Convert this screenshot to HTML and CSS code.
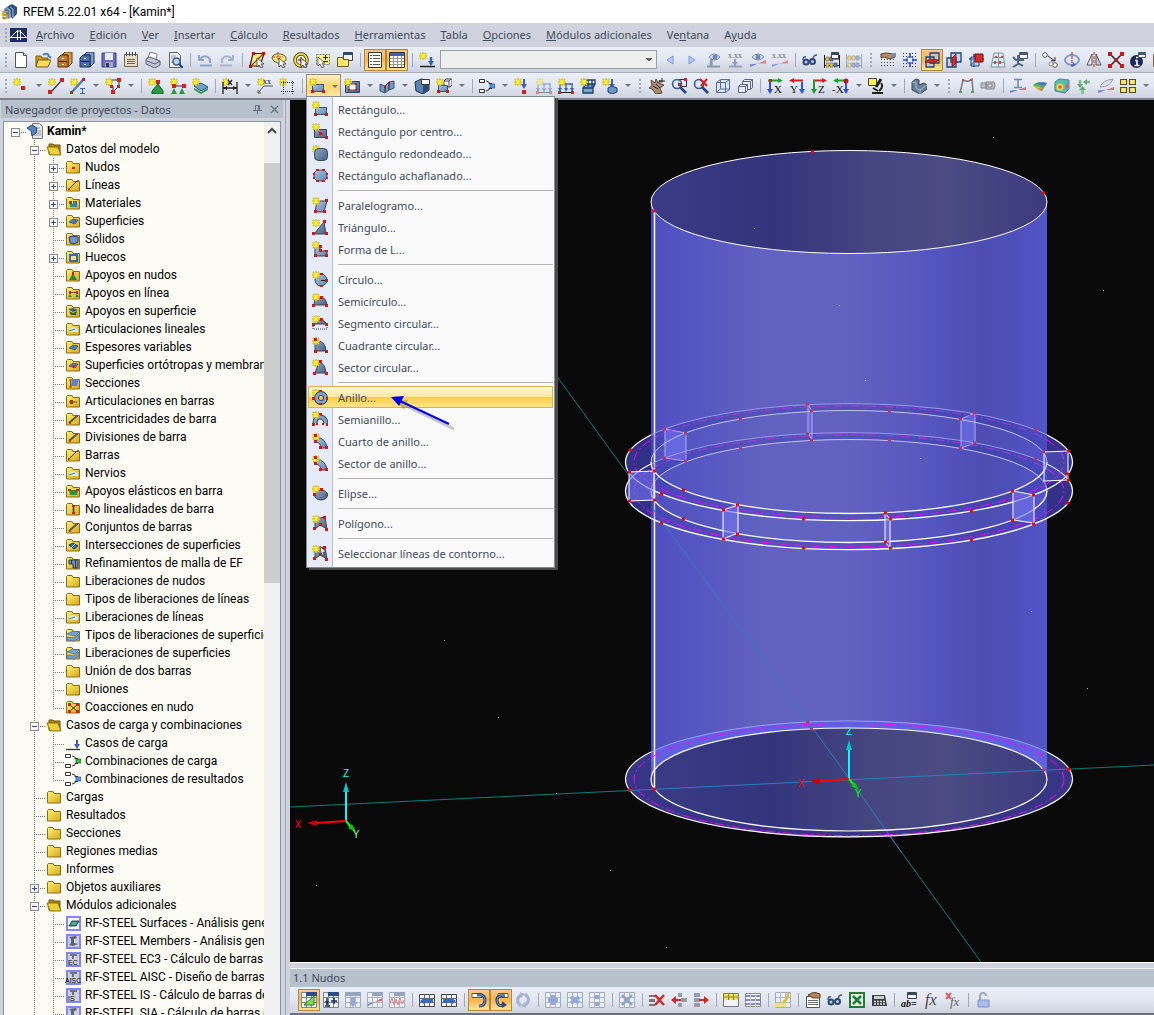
FILE: index.html
```html
<!DOCTYPE html>
<html lang="es">
<head>
<meta charset="utf-8">
<title>RFEM 5.22.01 x64 - [Kamin*]</title>
<meta name="viewport" content="width=device-width, initial-scale=1">
<link rel="stylesheet" href="styles.css">
</head>
<body>
<svg class="sprite" aria-hidden="true">
<defs>
<linearGradient id="gBlue" x1="0" y1="0" x2="1" y2="1"><stop offset="0" stop-color="#a9c4e0"/><stop offset="1" stop-color="#5f86b0"/></linearGradient>
<linearGradient id="gSteel" x1="0" y1="0" x2="1" y2="1"><stop offset="0" stop-color="#8fa8c4"/><stop offset="1" stop-color="#47617f"/></linearGradient>
<linearGradient id="gFolder" x1="0" y1="0" x2="1" y2="1"><stop offset="0" stop-color="#fff27a"/><stop offset="1" stop-color="#d8a818"/></linearGradient>
</defs>
<symbol id="st" viewBox="0 0 16 16"><path d="M4 0v8M0 4h8M1 1l6 6M7 1L1 7" stroke="#a89c30" stroke-width="1.600"/><path d="M4 0v8M0 4h8M1.500 1.500l5 5M6.500 1.500l-5 5" stroke="#fff02a" stroke-width="1.100"/></symbol>
<symbol id="plus" viewBox="0 0 20 18"><path d="M15 10.5h5" stroke="#777" stroke-dasharray="1 1"/><rect x="5.500" y="6.500" width="8" height="8" fill="#fff" stroke="#8a8a8a"/><path d="M7 10.500h5M9.500 8v5" stroke="#2b4c9b"/></symbol>
<symbol id="minus" viewBox="0 0 20 18"><path d="M15 10.5h5" stroke="#777" stroke-dasharray="1 1"/><rect x="5.500" y="6.500" width="8" height="8" fill="#fff" stroke="#8a8a8a"/><path d="M7 10.500h5" stroke="#2b4c9b"/></symbol>

<symbol id="logo" viewBox="0 0 16 16"><path d="M2 5l4-3 4 3v8l-4 2z" fill="#5f7fa6"/><path d="M6 2l4-2 5 3v7l-5 5z" fill="#31527e"/><path d="M8 3l3 2v8M5 4l3 2v8" stroke="#a8c0dc"/></symbol>
<symbol id="bridge" viewBox="0 0 17 14"><path d="M0 0h17v14H0z" fill="#1c2c60"/><path d="M0 9.500h17M7.500 2v10M10.500 2v10M1 9l6-6 3 0 6 6" stroke="#fff"/></symbol>
<symbol id="new" viewBox="0 0 16 16"><path d="M2.500.5h8l3 3v12h-11z" fill="#fff" stroke="#555"/><path d="M10.500.5v3h3" fill="#ddd" stroke="#555"/></symbol>
<symbol id="open" viewBox="0 0 16 16"><path d="M1 14V4h5l1 2h6v8z" fill="#c89c1c" stroke="#7a5c10"/><path d="M3 8h13l-3 7H1z" fill="#f6dc5a" stroke="#7a5c10"/><path d="M8 3q4-3 6 1" stroke="#4c7cc0" stroke-width="2"/><path d="M12 4h4v3z" fill="#4c7cc0"/></symbol>
<symbol id="drawO" viewBox="0 0 16 16"><path d="M5 3l3-3h7v11l-4 4V3z" fill="#d89c48" stroke="#5c3808"/><path d="M1 6l3-3h7v12H1z" fill="#c07c28" stroke="#5c3808"/><path d="M2 9.500h8" stroke="#3a2000"/><path d="M5 6h2v1H5zM5 12h2v1H5z" fill="#fff"/></symbol>
<symbol id="drawB" viewBox="0 0 16 16"><path d="M5 3l3-3h7v11l-4 4V3z" fill="#7c9cd4" stroke="#1c2c58"/><path d="M1 6l3-3h7v12H1z" fill="#4c70b4" stroke="#1c2c58"/><path d="M2 9.500h8" stroke="#101c40"/><path d="M5 6h2v1H5zM5 12h2v1H5z" fill="#fff"/></symbol>
<symbol id="save" viewBox="0 0 16 16"><path d="M1 1h14v14H1z" fill="#6c6cb8" stroke="#3c3c88"/><path d="M4 1h8v7H4z" fill="#e8eaf4"/><path d="M4 10h8v5H4z" fill="#a8a8c0"/><path d="M5 11h3v4H5z" fill="#33336c"/></symbol>
<symbol id="doc" viewBox="0 0 16 16"><path d="M1.500 2.500h13v12h-13z" fill="#e8dccc" stroke="#7a644c"/><path d="M3.500 0v4M6.500 0v4M9.500 0v4M12.500 0v4" stroke="#444"/><path d="M4 7.500h8M4 9.500h8M4 11.500h8" stroke="#7a644c"/></symbol>
<symbol id="print" viewBox="0 0 16 16"><path d="M3 6l2-6 7 2-1 6z" fill="#fff" stroke="#777"/><path d="M1 7l4-2 10 4v4l-5 3-9-4z" fill="#c4c8d4" stroke="#555c6c"/><path d="M2 9l8 3 5-3" stroke="#555c6c"/></symbol>
<symbol id="preview" viewBox="0 0 16 16"><path d="M2.500.5h8l3 3v12h-11z" fill="#f0f2f6" stroke="#666"/><path d="M4 4h5M4 6h4M4 10h3" stroke="#8a94a8"/><circle cx="9.500" cy="9.500" r="3.500" fill="#b8d8f0" stroke="#3f5f8f" stroke-width="1.500"/><path d="M12 12l4 4" stroke="#2c447c" stroke-width="2"/></symbol>
<symbol id="undo" viewBox="0 0 16 16"><path d="M2 3v5h5M2 8q6-7 11-1v4M3 13.500h12" stroke="#8fa3c8" stroke-width="2"/></symbol>
<symbol id="redo" viewBox="0 0 16 16"><path d="M14 3v5H9M14 8Q8 1 3 7v4M1 13.500h12" stroke="#a3b3ce" stroke-width="2"/></symbol>
<symbol id="cur" viewBox="0 0 16 16"><path d="M8 6l7 6h-3l2 3-2 1-2-3-2 2z" fill="#fff" stroke="#333" stroke-width=".8"/></symbol>
<symbol id="selR" viewBox="0 0 16 16"><path d="M4 1.500h11L11 14H1z" fill="#ffee78" stroke="#222" stroke-width="1.200"/><path d="M2 14L14 2" stroke="#c81818" stroke-width="1.200"/><path d="M3 0h3v3H3zM13 0h3v3h-3zM0 13h3v3H0z" fill="#c81010"/><use href="#cur"/></symbol>
<symbol id="selL" viewBox="0 0 16 16"><path d="M1 6q1-5 8-4t6 6q-3 4-8 3T1 6z" fill="#ffee78" stroke="#5f5a28"/><path d="M7 0v9M2 5h10" stroke="#d03030" stroke-dasharray="2 1"/><use href="#cur"/></symbol>
<symbol id="selC" viewBox="0 0 16 16"><circle cx="8" cy="8" r="6" fill="#fff" stroke="#222" stroke-width="3.400"/><circle cx="8" cy="8" r="6" fill="none" stroke="#f8e020" stroke-width="2"/><path d="M5 8h6M8 5v6" stroke="#d02020" stroke-width="1.500"/><use href="#cur"/></symbol>
<symbol id="selP" viewBox="0 0 16 16"><path d="M1.500 2.500h13v10h-13z" fill="#fff27a" stroke="#777" stroke-dasharray="2 1"/><path d="M10.500 3v5M8 5.500h5M8 9.500h5" stroke="#222"/><path d="M3 5l7 6H7l2 4-2 1-2-4-2 2z" fill="#fff" stroke="#444" stroke-width=".8"/></symbol>
<symbol id="wins" viewBox="0 0 16 16"><path d="M6.500.5h9v8h-9z" fill="#f2f4f8" stroke="#444"/><path d="M7 1h8v2H7z" fill="#28488c"/><path d="M.5 5.500h5l1 2h5v7H.5z" fill="#ffe668" stroke="#6c6020"/></symbol>
<symbol id="navi" viewBox="0 0 16 16"><path d="M1.500.5h13v15h-13z" fill="#fff" stroke="#3c3830"/><path d="M3 3.500h2M3 6.500h2M3 9.500h2M3 12.500h2M6 3.500h7M6 6.500h7M6 9.500h7M6 12.500h7" stroke="#5a564c"/></symbol>
<symbol id="tabl" viewBox="0 0 16 16"><path d="M.5.500h15v15H.5z" fill="#fff" stroke="#3c3830"/><path d="M1 1h14v3H1z" fill="#3c64b4"/><path d="M1 6.500h14M1 9.500h14M1 12.500h14M4.500 4v11M8.500 4v11M12.500 4v11" stroke="#999588"/></symbol>
<symbol id="load" viewBox="0 0 16 16"><use href="#st"/><path d="M1 14.500h15" stroke="#222" stroke-width="1.500"/><path d="M12 5v6" stroke="#3c60b8" stroke-width="2.500"/><path d="M9 9h6l-3 5z" fill="#3c60b8"/></symbol>
<symbol id="lt" viewBox="0 0 16 16"><path d="M11 4v8L5 8z" fill="#b8cbee" stroke="#7c98d0"/></symbol>
<symbol id="gt" viewBox="0 0 16 16"><path d="M5 4v8l6-4z" fill="#b8cbee" stroke="#7c98d0"/></symbol>
<symbol id="eyeP" viewBox="0 0 16 16"><path d="M1 14.500h13" stroke="#9098a8" stroke-width="2"/><path d="M6 6q-1 4-1 8" stroke="#9098b8" stroke-width="3"/><path d="M3 5q5-6 11 0-5 6-11 0z" fill="#e4eaf4" stroke="#7c88a0"/><circle cx="9" cy="5" r="2.500" fill="#6c88b8"/></symbol>
<symbol id="xxL" viewBox="0 0 16 16"><path d="M7 7v7M1 14.500h13" stroke="#98a0b4" stroke-width="2"/><path d="M4 10h6l-3 4z" fill="#8c9cc4"/></symbol>
<symbol id="eyeD" viewBox="0 0 16 16"><path d="M2 5q6-6 12 0-6 6-12 0z" fill="#e4eaf4" stroke="#7c88a0"/><circle cx="8" cy="5" r="2.500" fill="#6c88b8"/><path d="M0 15l8-3.500-8 1z" fill="#6c7ce0"/><path d="M16 8l-8 3.500h8z" fill="#e07c88"/></symbol>
<symbol id="xxD" viewBox="0 0 16 16"><path d="M0 15l8-3.500-8 1z" fill="#8c9ce0"/><path d="M16 8l-8 3.500h8z" fill="#e08c98"/></symbol>
<symbol id="glas" viewBox="0 0 16 16"><path d="M1 8q0-4 3-3M15 3q-4 0-4 5" stroke="#445c88" stroke-width="1.500"/><circle cx="4" cy="10" r="2.500" fill="#b4c8e4" stroke="#304878" stroke-width="2"/><circle cx="10.500" cy="9.500" r="2.500" fill="#b4c8e4" stroke="#304878" stroke-width="2"/></symbol>
<symbol id="bead2" viewBox="0 0 16 16"><path d="M.5 3v13M15.500 3v13M1 13.500h15M1 7h15" stroke="#222"/><path d="M2 5h3v4H2zM2 11h3v4H2zM6 11h3v4H6z" fill="#e8c848" stroke="#7a6418" stroke-width=".6"/><path d="M6 5h3v4H6zM10 11h3v4h-3z" fill="#6484c8" stroke="#24448c" stroke-width=".6"/><path d="M7.500.5h7v6h-7z" fill="#fff" stroke="#444"/><path d="M8 1h6v2H8z" fill="#28488c"/></symbol>
<symbol id="bead1" viewBox="0 0 16 16"><path d="M.5 2v14M15.500 2v14M1 13.500h15M1 6h15" stroke="#9aa"/><path d="M2 4h3v4H2zM6 4h3v4H6zM2 11h3v4H2z" fill="#f0e0a0" stroke="#aa9a60" stroke-width=".6"/><path d="M10 4h3v4h-3zM6 11h3v4H6zM10 11h3v4h-3z" fill="#a8b8e0" stroke="#7888b8" stroke-width=".6"/></symbol>
<symbol id="handg" viewBox="0 0 16 16"><path d="M1 7.500h14M1 10.500h14M1 13.500h14" stroke="#444" stroke-width="1.200" stroke-dasharray="1 2"/><path d="M1 2l5-1 9 1v3l-5 2-6-2-3 1z" fill="#b88c64" stroke="#5c4028"/><path d="M11 1h5v4h-5z" fill="#7c8ca8"/></symbol>
<symbol id="gridp" viewBox="0 0 16 16"><path d="M1 1.500h14M1 4.500h14M1 11.500h14M1 14.500h14" stroke="#333" stroke-width="1.200" stroke-dasharray="1 2"/><circle cx="8" cy="8" r="3.500" fill="#e8ecf8" stroke="#2850b8"/><path d="M8 1v14M1 8h14" stroke="#2850b8" stroke-width="1.500" stroke-dasharray="5 4"/></symbol>
<symbol id="wp1" viewBox="0 0 16 16"><path d="M6 1h9v10H6zM2 5h8v10H2z" fill="#a8c8f0" fill-opacity=".6" stroke="#1c447c" stroke-width="1.300"/><path d="M1 10l5-3 9 1-5 3z" fill="#d82c2c" stroke="#701010" stroke-width=".7"/></symbol>
<symbol id="wp2" viewBox="0 0 16 16"><path d="M5 1h10v9H5zM1 6h9v9H1z" fill="#a8c8f0" fill-opacity=".6" stroke="#1c447c" stroke-width="1.300"/><path d="M6 6l4-4v9l-4 4z" fill="#d82c2c" stroke="#701010" stroke-width=".7"/></symbol>
<symbol id="wp3" viewBox="0 0 16 16"><path d="M1 7h15M6 2v13M3 13l6-6" stroke="#1c447c" stroke-width="1.500"/><path d="M3 5h8v9H3z" fill="#a8c8f0" fill-opacity=".5" stroke="#1c447c"/><path d="M7 2h8v8H7z" fill="#d82c2c" stroke="#701010"/></symbol>
<symbol id="mesh" viewBox="0 0 16 16"><path d="M4 1h9l2 14H1z" fill="#dce8ec" stroke="#7c98a8"/><path d="M8.500 1v14M3 5.500h11M2 10.500h12" stroke="#7c98a8"/><path d="M5 4h2v2H5zM11 4h2v2h-2zM4 9h2v3H4zM9 9h2v3H9z" fill="#e03c3c"/></symbol>
<symbol id="sect" viewBox="0 0 16 16"><path d="M1 5l3 3h8M6 3v9l-5 3M6 11l5 3" stroke="#4c6488" stroke-width="2"/><path d="M7.500.5h8v6h-8z" fill="#fff" stroke="#555"/><path d="M8 1h7v2H8z" fill="#3c5c98"/></symbol>
<symbol id="mv" viewBox="0 0 16 16"><circle cx="3" cy="3" r="2.300" fill="#fff" stroke="#555"/><circle cx="13" cy="13" r="2.300" fill="#fff" stroke="#555"/><circle cx="9" cy="12" r="2" fill="#fff" stroke="#888"/><path d="M6 4l7 5M13 9V5M13 9l-4-.500" stroke="#333"/></symbol>
<symbol id="rot" viewBox="0 0 16 16"><ellipse cx="8" cy="8" rx="7" ry="5" fill="none" stroke="#7c9cd0" stroke-width="2"/><path d="M8 0v16" stroke="#d02020" stroke-dasharray="3 1"/><path d="M9 10l3 3-4 2z" fill="#4870b8"/></symbol>
<symbol id="mir" viewBox="0 0 16 16"><path d="M6 2v11H1z" fill="#eef" stroke="#555"/><path d="M10 2v11h5z" fill="#ccd" stroke="#555"/><path d="M8 0v16" stroke="#d02020" stroke-dasharray="3 1"/></symbol>
<symbol id="xnod" viewBox="0 0 16 16"><path d="M1 1l14 14M15 1L1 15" stroke="#222" stroke-width="1.500"/><path d="M0 0h4v4H0zM12 0h4v4h-4zM0 12h4v4H0zM12 12h4v4h-4z" fill="#c81818"/><circle cx="8" cy="8" r="2" fill="#c81818"/></symbol>
<symbol id="info" viewBox="0 0 16 16"><circle cx="6.500" cy="9.500" r="6.500" fill="#18285c"/><path d="M5 8.500h2v4.500M4.500 13.500h5M6 5.500h2" stroke="#fff" stroke-width="1.600"/><path d="M8.500.5h7v5h-7z" fill="#fff" stroke="#555"/><path d="M9 1h6v2H9z" fill="#3c5c98"/></symbol>

<symbol id="node" viewBox="0 0 16 16"><use href="#st"/><path d="M8 8h4v4H8z" fill="#d02020"/></symbol>
<symbol id="line" viewBox="0 0 16 16"><use href="#st"/><path d="M3 14L14 2" stroke="#333" stroke-width="1.200"/><path d="M12 0h4v4h-4zM0 12h4v4H0z" fill="#d02020"/></symbol>
<symbol id="memb" viewBox="0 0 16 16"><use href="#st"/><path d="M2 14L13 2" stroke="#5878b0" stroke-width="2.500"/><path d="M12 0h3v3h-3zM0 13h3v3H0z" fill="#d02020"/><path d="M10 10.500h5M12.500 11v5M10 15.500h5" stroke="#3c64a8"/></symbol>
<symbol id="poly" viewBox="0 0 16 16"><path d="M5 2h9v6l-6 6V8" stroke="#333"/><use href="#st"/><path d="M12 0h4v4h-4zM12 7h3v3h-3zM6 12h4v4H6zM5 7h3v3H5z" fill="#d02020"/></symbol>
<symbol id="supN" viewBox="0 0 16 16"><use href="#st"/><path d="M10 6l5 7v3H4v-3z" fill="#2c9844" stroke="#0c5c20"/><path d="M8 2h4v4H8z" fill="#d02020"/></symbol>
<symbol id="supL" viewBox="0 0 16 16"><use href="#st"/><path d="M3 8h11" stroke="#333"/><path d="M2 6h4v4H2zM12 6h4v4h-4z" fill="#d02020"/><path d="M4 10l3 6H1zM12 10l3 6H9z" fill="#2c9844"/></symbol>
<symbol id="supS" viewBox="0 0 16 16"><path d="M2 8l7-3 7 4-7 4z" fill="#6ca0d0" stroke="#2c5480"/><path d="M2 10l7 4 7-4v2l-7 4-7-4z" fill="#2c9844"/><use href="#st"/></symbol>
<symbol id="dim" viewBox="0 0 16 16"><use href="#st"/><path d="M1 4v12M15 4v12M1 10h14M6 2l4 5M10 2L6 7" stroke="#222" stroke-width="1.300"/><path d="M1 10l4-2v4zM15 10l-4-2v4z" fill="#222"/></symbol>
<symbol id="xx" viewBox="0 0 16 16"><use href="#st"/><path d="M1 15l6-7h9M1 12v3h3" stroke="#555"/></symbol>
<symbol id="grd" viewBox="0 0 16 16"><use href="#st"/><path d="M2 4.500h14M2 13.500h14M4.500 3v13M13.500 3v13" stroke="#333" stroke-dasharray="1 1"/></symbol>
<symbol id="rec" viewBox="0 0 16 16"><rect x="3.500" y="6.500" width="11" height="7" fill="url(#gBlue)" stroke="#33557c"/><use href="#st"/><path d="M2 12h3v3H2zM13 12h3v3h-3z" fill="#d01818"/></symbol>
<symbol id="ope" viewBox="0 0 16 16"><path d="M1.500 3.500h14v11h-14z" fill="url(#gSteel)" stroke="#2c4868"/><path d="M5 6h7v6H5z" fill="#f4f6fa" stroke="#555"/><path d="M4 5h2v2H4zM11 5h2v2h-2zM4 11h2v2H4zM11 11h2v2h-2z" fill="#d01818"/><use href="#st"/></symbol>
<symbol id="fold" viewBox="0 0 16 16"><path d="M1 6l5 2 4-4 5-1v7l-5 2-4 3-5-2z" fill="#7898bc" stroke="#33557c"/><path d="M6 8v6M10 4v8" stroke="#222"/><path d="M5 8h2v2H5zM9 4h2v2H9z" fill="#a02020"/></symbol>
<symbol id="solid" viewBox="0 0 16 16"><path d="M1 4l6-3 8 2v9l-6 4-7-3z" fill="#5c84b4" stroke="#1c3450"/><path d="M9 7v9l6-4V4z" fill="#2c4c74"/><path d="M7.500 1.500h8v5h-8z" fill="#fff" stroke="#333"/></symbol>
<symbol id="solw" viewBox="0 0 16 16"><path d="M8 3l2-2h6v6l-2 2H8z" fill="#fff" stroke="#444"/><path d="M8 3h5v6M13 3l2-2" stroke="#444"/><path d="M2.500 7.500h9v6h-9z" fill="url(#gBlue)" stroke="#33557c"/><use href="#st"/><path d="M1 12h3v3H1zM10 12h3v3h-3z" fill="#d01818"/></symbol>
<symbol id="comb" viewBox="0 0 16 16"><path d="M.5 1.500h5v3h-5zM.5 11.500h5v3h-5z" fill="#fff" stroke="#333"/><path d="M7 3q3 0 4 3M7 13q3 0 4-3" stroke="#333"/><path d="M9 5h4v3zM9 11h4V8z" fill="#333"/><path d="M11 6h5v4h-5z" fill="#5c94e0" stroke="#1c4c98" stroke-width=".7"/></symbol>
<symbol id="combG" viewBox="0 0 16 16"><path d="M.5 1.500h5v3h-5zM.5 11.500h5v3h-5z" fill="#fff" stroke="#333"/><path d="M7 3q3 0 4 3M7 13q3 0 4-3" stroke="#333"/><path d="M9 5h4v3zM9 11h4V8z" fill="#333"/><path d="M11 6h5v4h-5z" fill="#30c040" stroke="#0c6418" stroke-width=".7"/></symbol>
<symbol id="ldN" viewBox="0 0 16 16"><use href="#st"/><path d="M10 1v6" stroke="#3c60b8" stroke-width="2"/><path d="M7 6h6l-3 5z" fill="#3c60b8"/><path d="M8 12h4v4H8z" fill="#d02020"/></symbol>
<symbol id="ldM" viewBox="0 0 16 16"><path d="M2 6h13M2 6v6M8 6v6M14 6v6" stroke="#3c60b8" stroke-width="1.300"/><path d="M0 10h4l-2 4zM6 10h4l-2 4zM12 10h4l-2 4z" fill="#3c60b8"/><path d="M0 13h3v3H0zM13 13h3v3h-3z" fill="#d02020"/><path d="M3 14.500h10" stroke="#222"/><use href="#st"/></symbol>
<symbol id="ldS" viewBox="0 0 16 16"><path d="M3 10l3-4h9l-2 4v5H3z" fill="#7ca4d0" stroke="#1c3c6c" stroke-width="1.300"/><path d="M3 2h12v4M8 2v7M12 2v7M3 10h10" stroke="#1c3c6c" stroke-width="1.300"/><use href="#st"/></symbol>
<symbol id="ldB" viewBox="0 0 16 16"><path d="M6 10l4-2 5 2v4l-5 2-4-2z" fill="#6c94c8" stroke="#1c3c6c"/><path d="M10 1v6" stroke="#3c60b8" stroke-width="2"/><path d="M7 6h6l-3 4z" fill="#3c60b8"/><use href="#st"/></symbol>
<symbol id="pan" viewBox="0 0 16 16"><path d="M2 2l4 3 1-4 2 4 2-3 0 4 4 1-4 3 2 5-6 1-4-5-3-1 3-2z" fill="#ac8c70" stroke="#3c2c1c" stroke-width=".8"/><path d="M4 8l5 3M7 6l4 4M13 0v5M10 3h6" stroke="#222"/></symbol>
<symbol id="zoomw" viewBox="0 0 16 16"><path d="M7.500 1.500h8v7h-8z" stroke="#333"/><circle cx="6" cy="6" r="4.500" fill="#d4e8f8" fill-opacity=".8" stroke="#3c5c94" stroke-width="1.600"/><path d="M9 9l6 6" stroke="#2c448c" stroke-width="2.600"/><path d="M13 0h3v3h-3zM7 5h3v3H7z" fill="#d02020"/></symbol>
<symbol id="zoomx" viewBox="0 0 16 16"><circle cx="6" cy="6" r="4.500" fill="#d4e8f8" stroke="#3c5c94" stroke-width="1.600"/><path d="M9 9l6 6" stroke="#2c448c" stroke-width="2.600"/><path d="M7 1l7 7M14 1L8 8" stroke="#d02020" stroke-width="2"/></symbol>
<symbol id="cube" viewBox="0 0 16 16"><path d="M1.500 4.500l4-3h9v10l-4 3h-9z" fill="#dce4f4" stroke="#5c6c9c"/><path d="M1.500 4.500h9v10M10.500 4.500l4-3M5.500 2v9h9M5.500 11l-4 3" stroke="#5c6c9c"/></symbol>
<symbol id="cubes" viewBox="0 0 16 16"><path d="M5.500 3.500l2-2h8v8l-2 2h-8z" fill="#e4eaf6" stroke="#5c6478"/><path d="M5.500 3.500h8v8M13.500 3.500l2-2" stroke="#5c6478"/><path d="M1.500 8.500l2-2h7v6l-2 2h-7z" fill="#e4eaf6" stroke="#5c6478"/><path d="M1.500 8.500h7v6M8.500 8.500l2-2" stroke="#5c6478"/></symbol>
<symbol id="axX" viewBox="0 0 16 16"><path d="M1 2.500h12" stroke="#18a030" stroke-width="2"/><path d="M11 0l5 2.500L11 5z" fill="#18a030"/><path d="M2 1h3v3H2z" fill="#d02020"/><path d="M3 4v8" stroke="#3058d0" stroke-width="2"/><path d="M0 11h6l-3 5z" fill="#3058d0"/></symbol>
<symbol id="axY" viewBox="0 0 16 16"><path d="M3 2.500h11" stroke="#d02020" stroke-width="2"/><path d="M5 0L0 2.500 5 5z" fill="#d02020"/><path d="M13 4v8" stroke="#3058d0" stroke-width="2"/><path d="M10 11h6l-3 5z" fill="#3058d0"/></symbol>
<symbol id="axZ" viewBox="0 0 16 16"><path d="M2 2.500h11" stroke="#d02020" stroke-width="2"/><path d="M11 0l5 2.500L11 5z" fill="#d02020"/><path d="M3 2v10" stroke="#18a030" stroke-width="2"/><path d="M0 11h6l-3 5z" fill="#18a030"/></symbol>
<symbol id="axM" viewBox="0 0 16 16"><path d="M3 2.500h10" stroke="#18a030" stroke-width="2"/><path d="M5 0L0 2.500 5 5z" fill="#18a030"/><circle cx="13" cy="3" r="2.500" fill="#c01818"/><path d="M13 5v7" stroke="#3058d0" stroke-width="2"/><path d="M10 11h6l-3 5z" fill="#3058d0"/></symbol>
<symbol id="scope" viewBox="0 0 16 16"><path d="M.5.500h8v7h-8z" fill="#ffee60" stroke="#444"/><path d="M13 1L8 9" stroke="#222" stroke-width="3"/><path d="M13 5q3 4-2 8M5 10l5 3" stroke="#222" stroke-width="2"/><path d="M4 14h11v2H4z" fill="#222"/></symbol>
<symbol id="lsh" viewBox="0 0 16 16"><path d="M1 4l4-3 3 1v5l5-2 3 2v4l-7 5-8-4z" fill="#6c8098" stroke="#33445c"/><path d="M1 4l4 1v5l4 2 7-5M9 12v4" stroke="#a8b8c8"/></symbol>
<symbol id="defo" viewBox="0 0 16 16"><path d="M2 15L5 2q5 3 9-1l1 13" stroke="#7c7c84" stroke-width="1.500"/><path d="M4 1h2v2H4zM12 1h2v2h-2z" fill="#d05050"/><path d="M1 13h3v2H1zM13 13h3v2h-3z" fill="#50a060"/></symbol>
<symbol id="roll" viewBox="0 0 16 16"><path d="M1 5h5v5H1zM6 4h8q2 3 0 7H6z" fill="#c0c0c8" stroke="#84848c"/><path d="M8 6h4v3H8z" fill="#e8e8ec" stroke="#84848c"/></symbol>
<symbol id="ires" viewBox="0 0 16 16"><path d="M4 1.500h8M8 2v7M4 9.500h8" stroke="#7088b0" stroke-width="1.500"/><path d="M0 15l8-3-8 .500z" fill="#6c7ce0"/><path d="M16 9l-8 3h8z" fill="#e06c78"/></symbol>
<symbol id="surfR" viewBox="0 0 16 16"><path d="M1 7q5-5 14-2l-5 8q-5-1-9-6z" fill="#48b858"/><path d="M3 6q5-3 12-1l-2 3q-6-2-10-2z" fill="#5c6ce0"/><path d="M2 8q5 0 9 3l-1 2q-5-1-8-5z" fill="#e8b848"/><path d="M6 10l4 3 1-2z" fill="#e06048"/></symbol>
<symbol id="solR" viewBox="0 0 16 16"><path d="M1 4l4-3 10 1v9l-4 4-10-2z" fill="#58c0a0" stroke="#489"/><circle cx="6" cy="9" r="3.500" fill="#f0d848"/><circle cx="6" cy="9" r="1.800" fill="#e85c38"/><path d="M12 5l3-3v9l-3 3z" fill="#7090e0"/><circle cx="13" cy="8" r="1.500" fill="#e85c38"/></symbol>
<symbol id="arrG" viewBox="0 0 16 16"><path d="M4 2v5M14 4H9M6.500 10v6" stroke="#80bc8c" stroke-width="2.500"/><path d="M1 6h6l-3 4zM11 1v6L7 4zM3 12h7l-3.500-4z" fill="#60a870"/></symbol>
<symbol id="leaf" viewBox="0 0 16 16"><path d="M2 9q3-7 13-8-3 8-13 8z" fill="#dce0e8" stroke="#98a0ac"/><path d="M0 15l8-3-8 .500z" fill="#6c7ce0"/><path d="M16 9l-8 3h8z" fill="#e06c78"/></symbol>
<symbol id="tiles" viewBox="0 0 16 16"><path d="M.5 1.500h6v5h-6zM9.500 1.500h6v5h-6zM.5 9.500h6v5h-6zM9.500 9.500h6v5h-6z" fill="#ffe674" stroke="#54501c" stroke-width="1.200"/></symbol>

<symbol id="f" viewBox="0 0 16 16"><path d="M1.500 3.500V14h13V4.500H8l-1-2H2.500z" fill="url(#gFolder)" stroke="#8a6c14"/></symbol>
<symbol id="fo" viewBox="0 0 16 16"><path d="M3 13V3h4l1 1h6v9z" fill="#b08c10" stroke="#6c5408"/><path d="M1 6h11l3 8H4z" fill="#ecd038" stroke="#6c5408" stroke-width=".8"/></symbol>
<symbol id="kam" viewBox="0 0 16 16"><path d="M5.500.5h7l3 3v12h-10z" fill="#e4e8ee" stroke="#777"/><path d="M7 8h7M7 10h7M7 12h7M7 5h6" stroke="#999"/><path d="M0 5l5-3 5 3-1 5-4 3-1-5z" fill="#5c84b8" stroke="#2c4c78"/></symbol>
<symbol id="fNod" viewBox="0 0 16 16"><use href="#f"/><path d="M7 8h3v2H7z" fill="#d02020"/></symbol>
<symbol id="fHin" viewBox="0 0 16 16"><use href="#f"/><path d="M4 9h8" stroke="#555"/><path d="M5 7h3v4H5z" fill="#a03820"/></symbol>
<symbol id="fLin" viewBox="0 0 16 16"><use href="#f"/><path d="M4 12l8-8" stroke="#333"/><path d="M12 3h2v2h-2zM3 11h2v2H3z" fill="#d04020"/></symbol>
<symbol id="fMat" viewBox="0 0 16 16"><use href="#f"/><path d="M4 6h3v3H4z" fill="#d02020"/><path d="M5 9h4v3H5z" fill="#20a040"/><path d="M8 6h4v6H8z" fill="#4070d0"/></symbol>
<symbol id="fSup" viewBox="0 0 16 16"><use href="#f"/><path d="M4 9l4-3 5 1-3 4z" fill="#4c7cc0" stroke="#1c3c6c" stroke-width=".6"/></symbol>
<symbol id="fOrt" viewBox="0 0 16 16"><use href="#f"/><path d="M4 9l4-3 5 1-3 4z" fill="#c0344c" stroke="#1c3c6c" stroke-width=".6"/><path d="M5 9l3-2 4 1" stroke="#4c7cc0" stroke-width="1.500"/></symbol>
<symbol id="fSol" viewBox="0 0 16 16"><use href="#f"/><path d="M4 6l4-1 5 1v5l-4 2-4-1z" fill="#6c98cc" stroke="#1c3c6c"/></symbol>
<symbol id="fHue" viewBox="0 0 16 16"><use href="#f"/><path d="M5 6h7v6H5z" fill="#f0e080" stroke="#3c6ca8" stroke-width="2"/></symbol>
<symbol id="fApN" viewBox="0 0 16 16"><use href="#f"/><path d="M8 6l4 7H4z" fill="#209040"/><path d="M7 5h2v3H7z" fill="#d02020"/></symbol>
<symbol id="fApL" viewBox="0 0 16 16"><use href="#f"/><path d="M4 7.500h9" stroke="#555"/><path d="M4 6h2v3H4zM11 6h2v3h-2z" fill="#d02020"/><path d="M5 9l2 3H3zM12 9l2 3h-4z" fill="#209040"/></symbol>
<symbol id="fApS" viewBox="0 0 16 16"><use href="#f"/><path d="M3 6l5-1 5 2-5 2z" fill="#305c98"/><path d="M4 8l4 2 4-2-1 4H6z" fill="#206040"/></symbol>
<symbol id="fArt" viewBox="0 0 16 16"><use href="#f"/><path d="M4 8l5-2 4 2v3H5z" fill="#dce4f0"/><path d="M4 10l6-2" stroke="#4c7cc0"/></symbol>
<symbol id="fSec" viewBox="0 0 16 16"><use href="#f"/><path d="M7 4h7l-2 7H6z" fill="#5c7ce0"/><path d="M4 5h3M5.500 5v7M4 12h3" stroke="#c03030"/></symbol>
<symbol id="fEla" viewBox="0 0 16 16"><use href="#f"/><path d="M4 7h9l-1 5H5z" fill="#309048"/><path d="M3 6h3v2H3zM11 6h3v2h-3z" fill="#d02020"/></symbol>
<symbol id="fNoL" viewBox="0 0 16 16"><use href="#f"/><path d="M8.500 4v9" stroke="#333" stroke-width="1.500"/><path d="M7 4h3v2H7zM7 11h3v2H7z" fill="#d02020"/></symbol>
<symbol id="fDiv" viewBox="0 0 16 16"><use href="#f"/><path d="M4 12l8-7" stroke="#555" stroke-width="2"/><path d="M11 4h2v2h-2zM4 11h2v2H4z" fill="#b04020"/></symbol>
<symbol id="fInt" viewBox="0 0 16 16"><use href="#f"/><path d="M4 8l4-2 5 3-4 3z" fill="#3c6cb8" stroke="#1c3c6c"/><path d="M6 11l5-5" stroke="#c0d8f0"/></symbol>
<symbol id="fRef" viewBox="0 0 16 16"><use href="#f"/><path d="M4 5h9v8H8V9H4z" fill="#7890b0" stroke="#28384c"/><path d="M6.500 5v4M10.500 5v8" stroke="#28384c"/></symbol>
<symbol id="fLib" viewBox="0 0 16 16"><use href="#f"/><path d="M2 7l6-3 6 1-4 4zM2 10l7 1 5-4v4l-5 3-7-1z" fill="#70a4dc" stroke="#3c6ca8" stroke-width=".7"/></symbol>
<symbol id="fCoa" viewBox="0 0 16 16"><use href="#f"/><path d="M4 5l9 8M13 5l-9 8" stroke="#333"/><path d="M3 4h3v3H3zM11 4h3v3h-3zM3 11h3v3H3zM11 11h3v3h-3z" fill="#d02020"/></symbol>
<symbol id="lc" viewBox="0 0 16 16"><path d="M1 14.500h14" stroke="#333" stroke-width="1.300"/><path d="M12 5v5" stroke="#3c60b8" stroke-width="2"/><path d="M9 9h6l-3 5z" fill="#3c60b8"/></symbol>
<symbol id="mSur" viewBox="0 0 16 16"><path d="M2 2h13v13H2z" fill="#f8f8f8" stroke="#8484f4" stroke-width="2"/><path d="M4 11l3-5h7l-3 5z" fill="#30a050" stroke="#223" stroke-width=".8"/><path d="M6 9l3-2h3l-2 3z" fill="#50b0e0"/></symbol>
<symbol id="mMem" viewBox="0 0 16 16"><path d="M2 2h13v13H2z" fill="#d0d0d4" stroke="#8484f4" stroke-width="2"/><path d="M4 4l7-1 1 2-3 1v4l4 1-5 2-4-1 2-2V6z" fill="#586478"/></symbol>
<symbol id="mGen" viewBox="0 0 16 16"><path d="M2 2h13v13H2z" fill="#d0d0d4" stroke="#8484f4" stroke-width="2"/><path d="M5 3h7v2H9v3H7V5H5z" fill="#687488"/></symbol>

<symbol id="d2" viewBox="0 0 16 16"><path d="M2.500 6.500h12v8h-12z" fill="url(#gSteel)" stroke="#33485f"/><path d="M7 9h3v3H7zM13 13h3v3h-3z" fill="#d01818"/><use href="#st"/></symbol>
<symbol id="d3" viewBox="0 0 16 16"><use href="#st"/><rect x="2.500" y="3.500" width="13" height="12" rx="4" fill="url(#gSteel)" stroke="#33485f"/></symbol>
<symbol id="d4" viewBox="0 0 16 16"><path d="M5 3h7l3 3v5l-3 3H5l-3-3V6z" fill="url(#gBlue)" stroke="#4c5c74"/><path d="M4 2h3v2H4zM10 2h3v2h-3zM4 13h3v2H4zM10 13h3v2h-3zM1 6h2v2H1zM14 6h2v2h-2zM1 10h2v2H1zM14 10h2v2h-2z" fill="#d01818"/></symbol>
<symbol id="d5" viewBox="0 0 16 16"><path d="M5 4h10l-3 11H3z" fill="url(#gBlue)" stroke="#33485f"/><use href="#st"/><path d="M13 2h3v3h-3zM2 13h3v3H2zM11 13h3v3h-3z" fill="#d01818"/></symbol>
<symbol id="d6" viewBox="0 0 16 16"><path d="M12 3l2 12H2z" fill="url(#gSteel)" stroke="#33485f"/><use href="#st"/><path d="M11 1h3v3h-3zM0 13h3v3H0zM13 13h3v3h-3z" fill="#d01818"/></symbol>
<symbol id="d7" viewBox="0 0 16 16"><path d="M3 4h5v6h7v5H3z" fill="url(#gBlue)" stroke="#33485f"/><use href="#st"/><path d="M7 4h3v3H7zM7 8h3v3H7zM13 9h3v2h-3zM2 13h3v3H2zM13 13h3v3h-3z" fill="#d01818"/></symbol>
<symbol id="d8" viewBox="0 0 16 16"><circle cx="9" cy="9" r="6" fill="url(#gBlue)" stroke="#33485f"/><use href="#st"/><path d="M9 9.500h5" stroke="#222"/><path d="M8 2h3v2H8zM13 8h3v3h-3zM8 14h3v2H8z" fill="#d01818"/></symbol>
<symbol id="d9" viewBox="0 0 16 16"><path d="M2 12q0-8 6-8t7 8z" fill="url(#gSteel)" stroke="#33485f"/><use href="#st"/><path d="M8 3h3v3H8zM0 11h3v3H0zM13 11h3v3h-3z" fill="#d01818"/></symbol>
<symbol id="d10" viewBox="0 0 16 16"><path d="M2 9q6-9 13 0z" fill="url(#gSteel)" stroke="#33485f"/><path d="M1 9v5h14V9" stroke="#333" stroke-dasharray="1 1"/><use href="#st"/><path d="M8 3h3v3H8zM0 8h3v3H0zM13 8h3v3h-3z" fill="#d01818"/></symbol>
<symbol id="d11" viewBox="0 0 16 16"><path d="M3 3q11 1 11 11H3z" fill="url(#gSteel)" stroke="#33485f"/><use href="#st"/><path d="M2 1h3v3H2zM2 13h3v3H2zM13 13h3v3h-3z" fill="#d01818"/></symbol>
<symbol id="d12" viewBox="0 0 16 16"><path d="M7 3q6 1 7 11H3z" fill="url(#gSteel)" stroke="#33485f"/><use href="#st"/><path d="M7 1h3v3H7zM1 13h3v3H1zM13 13h3v3h-3z" fill="#d01818"/></symbol>
<symbol id="d13" viewBox="0 0 16 16"><use href="#st"/><circle cx="9" cy="9" r="4.500" fill="none" stroke="#33485f" stroke-width="5"/><circle cx="9" cy="9" r="4.500" fill="none" stroke="#86a2c4" stroke-width="3"/><path d="M7 1h3v2H7zM0 8h3v3H0zM14 8h2v3h-2zM7 14h3v2H7z" fill="#d01818"/></symbol>
<symbol id="d14" viewBox="0 0 16 16"><path d="M3 12q0-6 5-6t6 6" stroke="#33485f" stroke-width="5"/><path d="M3 12q0-6 5-6t6 6" stroke="#86a2c4" stroke-width="3"/><use href="#st"/><path d="M7 2h3v2H7zM0 12h3v3H0zM4 12h2v2H4zM14 12h2v3h-2zM10 12h2v2h-2z" fill="#d01818"/></symbol>
<symbol id="d15" viewBox="0 0 16 16"><path d="M4 4q10 1 11 11H9q0-5-5-6z" fill="url(#gBlue)" stroke="#33485f"/><use href="#st"/><path d="M2 1h3v3H2zM2 7h3v3H2zM7 13h3v3H7zM13 13h3v3h-3z" fill="#d01818"/></symbol>
<symbol id="d16" viewBox="0 0 16 16"><ellipse cx="9" cy="10" rx="6.500" ry="5" fill="url(#gSteel)" stroke="#33485f"/><use href="#st"/><path d="M8 3h3v3H8zM1 8h3v3H1zM14 8h2v3h-2z" fill="#d01818"/></symbol>
<symbol id="d17" viewBox="0 0 16 16"><path d="M3 4l10-2 2 12-7-4-5 4z" fill="url(#gSteel)" stroke="#33485f"/><use href="#st"/><path d="M11 1h3v3h-3zM1 12h3v3H1zM13 13h3v3h-3zM7 8h3v3H7z" fill="#d01818"/></symbol>
<symbol id="d18" viewBox="0 0 16 16"><use href="#d17"/><path d="M8 1l6 6h-3l1 3-2 0-1-3z" fill="#fff" stroke="#333" stroke-width=".7"/></symbol>

<symbol id="t" viewBox="0 0 16 16"><path d="M.5.500h15v15H.5z" fill="#f2f5fa" stroke="#7c8794"/><path d="M.5 5.500h15M.5 10.500h15M5.500 0v16M10.500 0v16" stroke="#7c8794"/><path d="M5 0h11v4H5z" fill="#2c4c8c"/></symbol>
<symbol id="tD" viewBox="0 0 16 16"><path d="M.5.500h15v15H.5z" fill="#eceff5" stroke="#a4acbc"/><path d="M.5 5.500h15M.5 10.500h15M5.500 0v16M10.500 0v16" stroke="#b0b8c6"/></symbol>
<symbol id="tM" viewBox="0 0 16 16"><path d="M.5 2.500h15v12H.5z" fill="#f4f6fa" stroke="#444"/><path d="M0 6.500h16M0 10.500h16M5.500 2v12M10.500 2v12" stroke="#666"/></symbol>
<symbol id="b1" viewBox="0 0 16 16"><use href="#t"/><path d="M3 13L13 4v9z" fill="#7ce050" stroke="#287c18"/></symbol>
<symbol id="b2" viewBox="0 0 16 16"><use href="#t"/><path d="M4 6v7M11 6v6M8 9h6M2 14h5" stroke="#1c2c5c" stroke-width="1.500"/><path d="M2 9h4l-2 4z" fill="#1c2c5c"/></symbol>
<symbol id="b3" viewBox="0 0 16 16"><use href="#tD"/><path d="M0 0h16v4H0z" fill="#98a4c0"/><path d="M6 5h4v5h3l-5 5-5-5h3z" fill="#94a8d4"/></symbol>
<symbol id="b4" viewBox="0 0 16 16"><use href="#tD"/><path d="M5 0h11v4H5z" fill="#98a4c0"/><path d="M1 14l7-4-7 2z" fill="#6470e0"/><path d="M15 6l-7 4 7-1z" fill="#e06470"/></symbol>
<symbol id="b5" viewBox="0 0 16 16"><use href="#tD"/><path d="M5 0h11v4H5z" fill="#98a4c0"/><path d="M1 11l2-5 2 7 2-6 2 6 2-7 2 6 2-4" stroke="#e08088"/></symbol>
<symbol id="b6" viewBox="0 0 16 16"><use href="#tM"/><path d="M1 9l5-4v2h8v4H6v2z" fill="#3c68c0"/></symbol>
<symbol id="b7" viewBox="0 0 16 16"><use href="#tM"/><path d="M15 9l-5-4v2H2v4h8v2z" fill="#3c68c0"/></symbol>
<symbol id="b8" viewBox="0 0 16 16"><path d="M1 1.500h10v4H1z" fill="#fff" stroke="#555"/><path d="M6 3q8-1 8 5t-6 6" stroke="#24447c" stroke-width="3"/><path d="M6 3q8-1 8 5t-6 6" stroke="#7c9ccc"/></symbol>
<symbol id="b9" viewBox="0 0 16 16"><path d="M5 1.500h10v4H5z" fill="#fff" stroke="#555"/><path d="M12 4Q3 3 4 9t6 4" stroke="#24447c" stroke-width="3"/><path d="M12 4Q3 3 4 9t6 4" stroke="#7c9ccc"/><path d="M9 9l5 4-5 3z" fill="#24447c"/></symbol>
<symbol id="b10" viewBox="0 0 16 16"><path d="M6 14Q-1 8 6 3M10 2q7 6 0 11" stroke="#a8b4d0" stroke-width="3"/><path d="M5 0l5 2-4 4zM11 16l-5-2 4-4z" fill="#a8b4d0"/></symbol>
<symbol id="b11" viewBox="0 0 16 16"><use href="#tD"/><path d="M8 3v10M3 8h10" stroke="#94a8d8" stroke-width="4"/></symbol>
<symbol id="b12" viewBox="0 0 16 16"><use href="#tD"/><path d="M4 5l8 6M12 5l-8 6" stroke="#94a8d8" stroke-width="4"/></symbol>
<symbol id="b13" viewBox="0 0 16 16"><use href="#tD"/><path d="M6 3h4v4H6zM6 10h4v4H6z" fill="#94a8d8"/></symbol>
<symbol id="b14" viewBox="0 0 16 16"><use href="#tD"/><path d="M3 3l10 10M13 3L3 13" stroke="#94a4c4" stroke-width="2.500"/></symbol>
<symbol id="b15" viewBox="0 0 16 16"><path d="M0 3h6v2H0zM0 7h6v3H0zM0 12h6v2H0z" fill="#777"/><path d="M6 3l9 10M15 3L6 13" stroke="#d02828" stroke-width="2.500"/></symbol>
<symbol id="b16" viewBox="0 0 16 16"><path d="M7 1h4v4H7zM10 6h6v4h-6zM7 11h4v4H7z" fill="#99a"/><path d="M3 8h7" stroke="#d02828" stroke-width="2"/><path d="M5 4v8L0 8z" fill="#d02828"/></symbol>
<symbol id="b17" viewBox="0 0 16 16"><path d="M1 1h6v4H1zM1 6h6v4H1zM1 11h6v4H1z" fill="#99a"/><path d="M6 8h7" stroke="#d02828" stroke-width="2"/><path d="M11 4v8l5-4z" fill="#d02828"/></symbol>
<symbol id="b18" viewBox="0 0 16 16"><path d="M.5 1.500h15v13H.5z" fill="#f2f4f8" stroke="#777"/><path d="M1 2h14v6H1z" fill="#f0e458"/><path d="M1 5h14M5.500 2v6M10.500 2v6" stroke="#888038"/></symbol>
<symbol id="b19" viewBox="0 0 16 16"><path d="M.5 1.500h15v13H.5z" fill="#fff" stroke="#888"/><path d="M1 4h14M1 8h14M1 12h14" stroke="#8484d8" stroke-width="2"/><path d="M5.500 2v13M10.500 2v13" stroke="#ccd"/></symbol>
<symbol id="b20" viewBox="0 0 16 16"><use href="#tD"/><path d="M0 11h11v4H0z" fill="#ece480"/><path d="M13 1q0 7-5 9" stroke="#d8c028" stroke-width="2.500"/></symbol>
<symbol id="b21" viewBox="0 0 16 16"><path d="M1.500 4.500h13v11h-13z" fill="#fff" stroke="#555"/><path d="M3 8.500h10M3 10.500h10M3 12.500h10" stroke="#667"/><path d="M3 3l6-3 6 2v4H8z" fill="#b48458" stroke="#5c4028"/></symbol>
<symbol id="b22" viewBox="0 0 16 16"><path d="M1 1h14v14H1z" fill="#e8f4e8" stroke="#207c30" stroke-width="2"/><path d="M4 4l8 8M12 4l-8 8" stroke="#207c30" stroke-width="2.500"/></symbol>
<symbol id="b23" viewBox="0 0 16 16"><path d="M1 3h13l2 11H1z" fill="#3c4048"/><path d="M3 4h10v3H3z" fill="#c8d0c8"/><path d="M3 9.500h11M3 12h11" stroke="#ddd" stroke-width="1.500" stroke-dasharray="2 1"/></symbol>
<symbol id="b24" viewBox="0 0 16 16"><path d="M6.500.5h9v6h-9z" fill="#fff" stroke="#444"/><path d="M7 1h8v2H7z" fill="#28488c"/></symbol>
<symbol id="b26" viewBox="0 0 16 16"><path d="M1 1l5 6M6 1L1 7" stroke="#d86068" stroke-width="2"/></symbol>
<symbol id="b27" viewBox="0 0 16 16"><path d="M5 8V4q0-3 3-3t3 3" stroke="#a0a8b4" stroke-width="2"/><path d="M3 8h11v7H3z" fill="#a8bcf0" stroke="#8494c0"/></symbol>
</svg>

<header class="titlebar"><svg class="ic" viewBox="0 0 16 16"><use href="#logo"/><text class="five" x="0" y="15">5</text></svg><h1>RFEM 5.22.01 x64 - [Kamin*]</h1></header>

<nav class="menubar">
<span class="grip"></span><svg class="bridge"><use href="#bridge"/></svg>
<a href="#"><u>A</u>rchivo</a><a href="#"><u>E</u>dición</a><a href="#"><u>V</u>er</a><a href="#"><u>I</u>nsertar</a><a href="#"><u>C</u>álculo</a><a href="#"><u>R</u>esultados</a><a href="#"><u>H</u>erramientas</a><a href="#"><u>T</u>abla</a><a href="#"><u>O</u>pciones</a><a href="#"><u>M</u>ódulos adicionales</a><a href="#">Ve<u>n</u>tana</a><a href="#">A<u>y</u>uda</a>
</nav>

<div class="toolbar" role="toolbar" aria-label="Estándar">
<span class="grip"></span>
<button aria-label="Nuevo"><svg><use href="#new"/></svg></button>
<button aria-label="Abrir"><svg><use href="#open"/></svg></button>
<button aria-label="Administrador de proyectos"><svg><use href="#drawO"/></svg></button>
<button aria-label="Bloques"><svg><use href="#drawB"/></svg></button>
<button aria-label="Guardar"><svg><use href="#save"/></svg></button>
<button aria-label="Informe"><svg><use href="#doc"/></svg></button>
<button aria-label="Imprimir"><svg><use href="#print"/></svg></button>
<button aria-label="Vista preliminar"><svg><use href="#preview"/></svg></button>
<span class="sep"></span>
<button aria-label="Deshacer"><svg><use href="#undo"/></svg></button>
<button aria-label="Rehacer"><svg><use href="#redo"/></svg></button>
<span class="sep"></span>
<button aria-label="Selección por paralelogramo"><svg><use href="#selR"/></svg></button>
<button aria-label="Selección por lazo"><svg><use href="#selL"/></svg></button>
<button aria-label="Selección circular"><svg><use href="#selC"/></svg></button>
<button aria-label="Selección añadida"><svg><use href="#selP"/></svg></button>
<button aria-label="Ventanas"><svg><use href="#wins"/></svg></button>
<span class="sep"></span>
<button class="on" aria-label="Navegador"><svg><use href="#navi"/></svg></button>
<button class="on" aria-label="Tablas"><svg><use href="#tabl"/></svg></button>
<span class="sep"></span>
<button aria-label="Nuevo caso de carga"><svg><use href="#load"/></svg></button>
<select class="combo" aria-label="Caso de carga"><option></option></select>
<button aria-label="Anterior"><svg><use href="#lt"/></svg></button>
<button aria-label="Siguiente"><svg><use href="#gt"/></svg></button>
<button aria-label="Mostrar cargas"><svg><use href="#eyeP"/></svg></button>
<button aria-label="Valores de carga"><svg viewBox="0 0 16 16"><use href="#xxL"/><text class="val" x="0" y="6">x.xx</text></svg></button>
<button aria-label="Mostrar resultados"><svg><use href="#eyeD"/></svg></button>
<button aria-label="Valores de resultados"><svg viewBox="0 0 16 16"><use href="#xxD"/><text class="val" x="0" y="6">x.xx</text></svg></button>
<span class="sep"></span>
<button aria-label="Comprobar"><svg><use href="#glas"/></svg></button>
<button aria-label="Parámetros de cálculo"><svg><use href="#bead2"/></svg></button>
<button aria-label="Calcular"><svg><use href="#bead1"/></svg></button>
<span class="grip wide"></span>
<button aria-label="Configurar rejilla"><svg><use href="#handg"/></svg></button>
<button aria-label="Rejilla"><svg><use href="#gridp"/></svg></button>
<button class="on" aria-label="Plano XY"><svg><use href="#wp1"/></svg></button>
<button aria-label="Plano YZ"><svg><use href="#wp2"/></svg></button>
<button aria-label="Plano XZ"><svg><use href="#wp3"/></svg></button>
<button aria-label="Malla de EF"><svg><use href="#mesh"/></svg></button>
<button aria-label="Sistema de coordenadas"><svg><use href="#sect"/></svg></button>
<span class="sep"></span>
<button aria-label="Mover"><svg><use href="#mv"/></svg></button>
<button aria-label="Girar"><svg><use href="#rot"/></svg></button>
<button aria-label="Reflejar"><svg><use href="#mir"/></svg></button>
<button aria-label="Conectar"><svg><use href="#xnod"/></svg></button>
<button aria-label="Información"><svg><use href="#info"/></svg></button>
<button aria-label="Documento"><svg><use href="#doc"/></svg></button>
</div>

<div class="toolbar second" role="toolbar" aria-label="Insertar">
<span class="grip"></span>
<button aria-label="Nudo"><svg><use href="#node"/></svg></button><button class="car" aria-label="Más nudos"></button>
<button aria-label="Línea"><svg><use href="#line"/></svg></button>
<button aria-label="Barra"><svg><use href="#memb"/></svg></button><button class="car" aria-label="Más barras"></button>
<button aria-label="Polilínea"><svg><use href="#poly"/></svg></button><button class="car" aria-label="Más líneas"></button>
<span class="sep"></span>
<button aria-label="Apoyo en nudo"><svg><use href="#supN"/></svg></button>
<button aria-label="Apoyo en línea"><svg><use href="#supL"/></svg></button>
<button aria-label="Apoyo en superficie"><svg><use href="#supS"/></svg></button>
<span class="sep"></span>
<button aria-label="Cota"><svg><use href="#dim"/></svg></button><button class="car" aria-label="Más cotas"></button>
<button aria-label="Comentario"><svg viewBox="0 0 16 16"><use href="#xx"/><text class="val dark" x="6" y="6">xx</text></svg></button>
<button aria-label="Línea auxiliar"><svg><use href="#grd"/></svg></button>
<span class="sep"></span>
<div class="split">
<button aria-label="Superficie plana"><svg><use href="#rec"/></svg></button><button class="car" aria-label="Más superficies" aria-expanded="true"></button>
<ul class="menu">
<li><button><svg><use href="#rec"/></svg>Rectángulo...</button></li>
<li><button><svg><use href="#d2"/></svg>Rectángulo por centro...</button></li>
<li><button><svg><use href="#d3"/></svg>Rectángulo redondeado...</button></li>
<li><button><svg><use href="#d4"/></svg>Rectángulo achaflanado...</button></li>
<li class="rule"></li>
<li><button><svg><use href="#d5"/></svg>Paralelogramo...</button></li>
<li><button><svg><use href="#d6"/></svg>Triángulo...</button></li>
<li><button><svg><use href="#d7"/></svg>Forma de L...</button></li>
<li class="rule"></li>
<li><button><svg><use href="#d8"/></svg>Círculo...</button></li>
<li><button><svg><use href="#d9"/></svg>Semicírculo...</button></li>
<li><button><svg><use href="#d10"/></svg>Segmento circular...</button></li>
<li><button><svg><use href="#d11"/></svg>Cuadrante circular...</button></li>
<li><button><svg><use href="#d12"/></svg>Sector circular...</button></li>
<li class="rule"></li>
<li class="hot"><button><svg><use href="#d13"/></svg>Anillo...</button>
<svg class="pointer" viewBox="0 0 72 40" aria-hidden="true"><g opacity=".2" transform="translate(4 4)"><path d="M10 8l50 24" stroke="#000" stroke-width="3"/><path d="M1 4l13-1-4 10z"/></g><path d="M10 8l49 23" stroke="#0000f0" stroke-width="2"/><path d="M1 4l13-1-5 10z" fill="#0000f0"/></svg></li>
<li><button><svg><use href="#d14"/></svg>Semianillo...</button></li>
<li><button><svg><use href="#d15"/></svg>Cuarto de anillo...</button></li>
<li><button><svg><use href="#d15"/></svg>Sector de anillo...</button></li>
<li class="rule"></li>
<li><button><svg><use href="#d16"/></svg>Elipse...</button></li>
<li class="rule"></li>
<li><button><svg><use href="#d17"/></svg>Polígono...</button></li>
<li class="rule"></li>
<li><button><svg><use href="#d18"/></svg>Seleccionar líneas de contorno...</button></li>
</ul>
</div>
<button aria-label="Hueco"><svg><use href="#ope"/></svg></button><button class="car" aria-label="Más huecos"></button>
<button aria-label="Superficie quebrada"><svg><use href="#fold"/></svg></button><button class="car" aria-label="Más superficies quebradas"></button>
<button aria-label="Sólido"><svg><use href="#solid"/></svg></button>
<button aria-label="Extrusión"><svg><use href="#solw"/></svg></button><button class="car" aria-label="Más sólidos"></button>
<span class="sep"></span>
<button aria-label="Combinación"><svg><use href="#comb"/></svg></button><button class="car" aria-label="Más combinaciones"></button>
<button aria-label="Carga en nudo"><svg><use href="#ldN"/></svg></button>
<button class="dim" aria-label="Carga en barra"><svg><use href="#ldM"/></svg></button>
<button aria-label="Carga en línea"><svg><use href="#ldM"/></svg></button>
<button aria-label="Carga superficial"><svg><use href="#ldS"/></svg></button>
<button aria-label="Carga en sólido"><svg><use href="#ldB"/></svg></button><button class="car" aria-label="Más cargas"></button>
<span class="grip wide"></span>
<button aria-label="Desplazar"><svg><use href="#pan"/></svg></button>
<button aria-label="Zoom de ventana"><svg><use href="#zoomw"/></svg></button>
<button aria-label="Zoom total"><svg><use href="#zoomx"/></svg></button>
<button aria-label="Isometría"><svg><use href="#cube"/></svg></button>
<button aria-label="Perspectiva"><svg><use href="#cubes"/></svg></button>
<span class="sep"></span>
<button aria-label="Vista X"><svg viewBox="0 0 16 16"><use href="#axX"/><text class="ax" x="7" y="15">X</text></svg></button>
<button aria-label="Vista Y"><svg viewBox="0 0 16 16"><use href="#axY"/><text class="ax" x="1" y="15">Y</text></svg></button>
<button aria-label="Vista Z"><svg viewBox="0 0 16 16"><use href="#axZ"/><text class="ax" x="7" y="15">Z</text></svg></button>
<button aria-label="Vista -X"><svg viewBox="0 0 16 16"><use href="#axM"/><text class="ax" x="-1" y="15">-X</text></svg></button><button class="car" aria-label="Más vistas"></button>
<button aria-label="Visibilidad"><svg><use href="#scope"/></svg></button><button class="car" aria-label="Más visibilidades"></button>
<span class="sep"></span>
<button aria-label="Representación"><svg><use href="#lsh"/></svg></button><button class="car" aria-label="Más representaciones"></button>
<span class="grip"></span>
<button aria-label="Deformaciones"><svg><use href="#defo"/></svg></button>
<button aria-label="Animación"><svg><use href="#roll"/></svg></button>
<span class="sep"></span>
<button aria-label="Resultados en barras"><svg><use href="#ires"/></svg></button>
<button aria-label="Resultados en superficies"><svg><use href="#surfR"/></svg></button>
<button aria-label="Resultados en sólidos"><svg><use href="#solR"/></svg></button>
<button aria-label="Reacciones"><svg><use href="#arrG"/></svg></button>
<button aria-label="Secciones"><svg><use href="#leaf"/></svg></button>
<button aria-label="Paneles"><svg><use href="#tiles"/></svg></button><button class="car" aria-label="Más paneles"></button>
</div>

<main>
<aside>
<div class="panelhead"><h2>Navegador de proyectos - Datos</h2><button aria-label="Fijar"><svg viewBox="0 0 9 9"><path d="M2.500 5V.5h4V5M0 5.500h9M4.500 6v3M5.500 1v4" fill="none" stroke="#667080"/></svg></button><button aria-label="Cerrar"><svg viewBox="0 0 9 9"><path d="M1 1l7 7M8 1L1 8" stroke="#667080" stroke-width="1.300"/></svg></button></div>
<div class="treebox">
<ul class="tree">
<li><div class="row"><button aria-label="Contraer"><svg><use href="#minus"/></svg></button><svg class="ic"><use href="#kam"/></svg><b>Kamin*</b></div>
<ul>
<li><div class="row"><button aria-label="Contraer"><svg><use href="#minus"/></svg></button><svg class="ic"><use href="#fo"/></svg>Datos del modelo</div>
<ul class="end">
<li><div class="row"><button aria-label="Expandir"><svg><use href="#plus"/></svg></button><svg class="ic"><use href="#fNod"/></svg>Nudos</div></li>
<li><div class="row"><button aria-label="Expandir"><svg><use href="#plus"/></svg></button><svg class="ic"><use href="#fLin"/></svg>Líneas</div></li>
<li><div class="row"><button aria-label="Expandir"><svg><use href="#plus"/></svg></button><svg class="ic"><use href="#fMat"/></svg>Materiales</div></li>
<li><div class="row"><button aria-label="Expandir"><svg><use href="#plus"/></svg></button><svg class="ic"><use href="#fSup"/></svg>Superficies</div></li>
<li><div class="row leaf"><svg class="ic"><use href="#fSol"/></svg>Sólidos</div></li>
<li><div class="row"><button aria-label="Expandir"><svg><use href="#plus"/></svg></button><svg class="ic"><use href="#fHue"/></svg>Huecos</div></li>
<li><div class="row leaf"><svg class="ic"><use href="#fApN"/></svg>Apoyos en nudos</div></li>
<li><div class="row leaf"><svg class="ic"><use href="#fApL"/></svg>Apoyos en línea</div></li>
<li><div class="row leaf"><svg class="ic"><use href="#fApS"/></svg>Apoyos en superficie</div></li>
<li><div class="row leaf"><svg class="ic"><use href="#fArt"/></svg>Articulaciones lineales</div></li>
<li><div class="row leaf"><svg class="ic"><use href="#fSup"/></svg>Espesores variables</div></li>
<li><div class="row leaf"><svg class="ic"><use href="#fOrt"/></svg>Superficies ortótropas y membranas</div></li>
<li><div class="row leaf"><svg class="ic"><use href="#fSec"/></svg>Secciones</div></li>
<li><div class="row leaf"><svg class="ic"><use href="#fHin"/></svg>Articulaciones en barras</div></li>
<li><div class="row leaf"><svg class="ic"><use href="#fDiv"/></svg>Excentricidades de barra</div></li>
<li><div class="row leaf"><svg class="ic"><use href="#fDiv"/></svg>Divisiones de barra</div></li>
<li><div class="row leaf"><svg class="ic"><use href="#fLin"/></svg>Barras</div></li>
<li><div class="row leaf"><svg class="ic"><use href="#fArt"/></svg>Nervios</div></li>
<li><div class="row leaf"><svg class="ic"><use href="#fEla"/></svg>Apoyos elásticos en barra</div></li>
<li><div class="row leaf"><svg class="ic"><use href="#fNoL"/></svg>No linealidades de barra</div></li>
<li><div class="row leaf"><svg class="ic"><use href="#fDiv"/></svg>Conjuntos de barras</div></li>
<li><div class="row leaf"><svg class="ic"><use href="#fInt"/></svg>Intersecciones de superficies</div></li>
<li><div class="row leaf"><svg class="ic"><use href="#fRef"/></svg>Refinamientos de malla de EF</div></li>
<li><div class="row leaf"><svg class="ic"><use href="#f"/></svg>Liberaciones de nudos</div></li>
<li><div class="row leaf"><svg class="ic"><use href="#f"/></svg>Tipos de liberaciones de líneas</div></li>
<li><div class="row leaf"><svg class="ic"><use href="#fArt"/></svg>Liberaciones de líneas</div></li>
<li><div class="row leaf"><svg class="ic"><use href="#fLib"/></svg>Tipos de liberaciones de superficies</div></li>
<li><div class="row leaf"><svg class="ic"><use href="#fLib"/></svg>Liberaciones de superficies</div></li>
<li><div class="row leaf"><svg class="ic"><use href="#f"/></svg>Unión de dos barras</div></li>
<li><div class="row leaf"><svg class="ic"><use href="#f"/></svg>Uniones</div></li>
<li><div class="row leaf"><svg class="ic"><use href="#fCoa"/></svg>Coacciones en nudo</div></li>
</ul></li>
<li><div class="row"><button aria-label="Contraer"><svg><use href="#minus"/></svg></button><svg class="ic"><use href="#fo"/></svg>Casos de carga y combinaciones</div>
<ul class="end">
<li><div class="row leaf"><svg class="ic"><use href="#lc"/></svg>Casos de carga</div></li>
<li><div class="row leaf"><svg class="ic"><use href="#combG"/></svg>Combinaciones de carga</div></li>
<li><div class="row leaf"><svg class="ic"><use href="#comb"/></svg>Combinaciones de resultados</div></li>
</ul></li>
<li><div class="row leaf"><svg class="ic"><use href="#f"/></svg>Cargas</div></li>
<li><div class="row leaf"><svg class="ic"><use href="#f"/></svg>Resultados</div></li>
<li><div class="row leaf"><svg class="ic"><use href="#f"/></svg>Secciones</div></li>
<li><div class="row leaf"><svg class="ic"><use href="#f"/></svg>Regiones medias</div></li>
<li><div class="row leaf"><svg class="ic"><use href="#f"/></svg>Informes</div></li>
<li><div class="row"><button aria-label="Expandir"><svg><use href="#plus"/></svg></button><svg class="ic"><use href="#f"/></svg>Objetos auxiliares</div></li>
<li><div class="row"><button aria-label="Contraer"><svg><use href="#minus"/></svg></button><svg class="ic"><use href="#fo"/></svg>Módulos adicionales</div>
<ul>
<li><div class="row leaf"><svg class="ic"><use href="#mSur"/></svg>RF-STEEL Surfaces - Análisis general</div></li>
<li><div class="row leaf"><svg class="ic"><use href="#mMem"/></svg>RF-STEEL Members - Análisis general</div></li>
<li><div class="row leaf"><svg class="ic" viewBox="0 0 16 16"><use href="#mGen"/><text class="tag" x="3" y="14">EC</text></svg>RF-STEEL EC3 - Cálculo de barras de acero</div></li>
<li><div class="row leaf"><svg class="ic" viewBox="0 0 16 16"><use href="#mGen"/><text class="tag" x="0" y="14">AISC</text></svg>RF-STEEL AISC - Diseño de barras de acero</div></li>
<li><div class="row leaf"><svg class="ic" viewBox="0 0 16 16"><use href="#mGen"/><text class="tag" x="3" y="14">IS</text></svg>RF-STEEL IS - Cálculo de barras de acero</div></li>
<li><div class="row leaf"><svg class="ic"><use href="#mMem"/></svg>RF-STEEL SIA - Cálculo de barras de acero</div></li>
</ul></li>
</ul></li>
</ul>
<div class="scroll"><button aria-label="Desplazar hacia arriba"><svg viewBox="0 0 10 6"><path d="M1 5l4-4 4 4" fill="none" stroke="#444" stroke-width="2"/></svg></button><div class="thumb"></div></div>
</div>
</aside>

<section class="work">
<svg class="scene" viewBox="290 100 864 862" preserveAspectRatio="xMinYMin slice" role="img" aria-label="Modelo 3D">
<defs>
<linearGradient id="cyl"><stop offset="0" stop-color="#4c4cb8"/><stop offset=".04" stop-color="#5252c2"/><stop offset=".15" stop-color="#5858c2"/><stop offset=".28" stop-color="#6262c0"/><stop offset=".5" stop-color="#6262c0"/><stop offset=".7" stop-color="#5656c0"/><stop offset=".84" stop-color="#4d4db2"/><stop offset=".93" stop-color="#5050bc"/><stop offset="1" stop-color="#5454cc"/></linearGradient>
<linearGradient id="cap"><stop offset="0" stop-color="#3a3a86"/><stop offset=".3" stop-color="#34347c"/><stop offset=".55" stop-color="#454580"/><stop offset=".75" stop-color="#4b4b82"/><stop offset="1" stop-color="#3b3b80"/></linearGradient>
<g id="ringback">
<path d="M651 435A223.500 58.500 0 0 1 1047 435" stroke="#9c9cf0"/>
<path d="M651 462A198 51.500 0 0 1 1047 462" stroke="#c4c4f2"/>
<path d="M651 440A215 56 0 0 1 1047 440" stroke="#a83ce0" stroke-dasharray="9 3 2 3"/>
</g>
<g id="ringfront">
<path d="M1047 435A223.500 58.500 0 1 1 651 435" stroke="#fff" stroke-width="1.300"/>
<path d="M1047 462A198 51.500 0 0 1 651 462" stroke="#fff" stroke-width="1.300"/>
<path d="M1047 440A215 56 0 1 1 651 440" stroke="#f0f" stroke-dasharray="9 3 2 3"/>
</g>
<path id="ring" fill-rule="evenodd" d="M625.500 462a223.500 58.500 0 1 0 447 0a223.500 58.500 0 1 0-447 0zM651 462a198 51.500 0 1 0 396 0a198 51.500 0 1 0-396 0z"/>
</defs>
<path fill="#090909" d="M290 100h864v862H290z"/>
<path d="M290 807L1154 765M556 375L981 962" stroke="#007f7c" fill="none"/>
<ellipse cx="849" cy="779.500" rx="223.500" ry="58" fill="#363684"/>
<use href="#ring" fill="#343480"/><use href="#ring" y="29" fill="#343480"/>
<path d="M651 202A198 51.500 0 0 0 1047 202V779A198 51.500 0 0 0 651 779z" fill="url(#cyl)"/>
<path d="M651 752A223.500 58 0 0 1 1047 752V779A198 51.500 0 0 0 651 779z" fill="#6060e0"/>
<ellipse cx="849" cy="779.500" rx="198" ry="51.500" fill="url(#cap)"/>
<ellipse cx="849" cy="202" rx="198" ry="51.500" fill="url(#cap)" stroke="#fff"/>
<path d="M654.500 212V789" stroke="#fff" stroke-width="1.500"/>
<path d="M651 506L850 779.500L902 853M629 790.500L1069 769" stroke="#2f7cc0" fill="none"/>
<use href="#ring" fill="#28289c" fill-opacity=".25"/><use href="#ring" y="29" fill="#28289c" fill-opacity=".25"/>
<g fill="#7474f4" fill-opacity=".6" stroke="#b0b0f0">
<path d="M665 429l21 4v28l-21-3z"/><path d="M808 404l4 7v29l-4-7z"/><path d="M961 419l14-6v30l-14 5z"/></g>
<g fill="none"><use href="#ringback"/><use href="#ringback" y="29"/><use href="#ringfront" y="29"/><use href="#ringfront"/></g>
<g fill="#7474f4" fill-opacity=".6" stroke="#fff">
<path d="M629 472l25-1v29l-25 1z"/><path d="M723 510l15-5v28l-15 6z"/><path d="M885 513l5 6v29l-5-6z"/><path d="M1013 491l21 4v28l-21-3z"/><path d="M1044 452l24-1v29l-24 1z" fill-opacity=".3"/></g>
<g fill="none"><path d="M651 752A223.500 58 0 0 1 1047 752" stroke="#a0a0f0"/><path d="M1047 752A223.500 58 0 1 1 651 752" stroke="#fff" stroke-width="1.200"/><ellipse cx="849" cy="779.500" rx="198" ry="51.500" stroke="#fff" stroke-width="1.200"/><ellipse cx="849" cy="779.500" rx="215" ry="56" stroke="#f0f" stroke-dasharray="9 3 2 3"/></g>
<g fill="none" stroke-width="4">
<path stroke="#b83468" stroke-width="3" d="M663 429h3M684 433h3M739 419h3M739 448h3M806 404h3M810 411h3M810 440h3M806 434h3M888 411h3M888 440h3M959 419h3M959 448h3M973 413h3M973 443h3M1034 430h3M1034 459h3M1042 452h3M684 461h3M663 458h3M1042 770h3M806 722h3M810 729h3"/>
<path stroke="#f00" stroke-width="3" d="M811 152h3M1042 193h3M653 211h3M629 450h3M628 472h3M653 471h3M628 501h3M653 500h3M682 490h3M660 494h3M682 519h3M660 523h3M722 510h3M736 505h3M736 534h3M722 539h3M802 519h3M802 548h3M884 513h3M889 519h3M884 542h3M889 548h3M970 511h3M970 540h3M1011 491h3M1032 495h3M1011 520h3M1032 524h3M1067 451h3M1066 474h3M1067 480h3M1066 503h3M1067 769h3M628 790h3M653 789h3"/></g>
<path d="M849 779V750M346 821V792" stroke="#0ff" stroke-width="2"/><path d="M846 750l3-10 3 10zM343 792l3-10 3 10z" fill="#00c8c8"/>
<path d="M849 779l-30 2M346 821l-30 2" stroke="#f00" stroke-width="2"/><path d="M820 778l-10 3 10 3zM317 820l-10 3 10 3z" fill="#c00"/>
<path d="M849 779l5 6M346 821l5 6" stroke="#0f0" stroke-width="2"/><path d="M851 786l8 4-4-8zM348 828l8 4-4-8z" fill="#0c0"/>
<g class="axis"><text x="849" y="735" fill="#0ff">Z</text><text x="801" y="787" fill="#f00">X</text><text x="858" y="797" fill="#0f0">Y</text><text x="346" y="777" fill="#0ff">Z</text><text x="298" y="828" fill="#f00">X</text><text x="356" y="838" fill="#9f9">Y</text></g>
<path stroke="#bbb" d="M993 137.500h1M1103 290.500h1M444 640.500h1M498 717.500h1M556 793.500h1M316 885.500h1M610 870.500h1M666 947.500h1M1087 688.500h1M754 228.500h1M839 305.500h1M920 458.500h1M1031 611.500h1M865 380.500h1"/>
</svg>

<div class="tables">
<h2>1.1 Nudos</h2>
<div class="toolbar low" role="toolbar" aria-label="Tabla">
<button class="on" aria-label="Edición gráfica"><svg><use href="#b1"/></svg></button>
<button aria-label="Datos del modelo"><svg><use href="#b2"/></svg></button>
<button aria-label="Cargas"><svg><use href="#b3"/></svg></button>
<button aria-label="Resultados"><svg><use href="#b4"/></svg></button>
<button aria-label="Dinámica"><svg><use href="#b5"/></svg></button>
<span class="sep"></span>
<button aria-label="Tabla anterior"><svg><use href="#b6"/></svg></button>
<button aria-label="Tabla siguiente"><svg><use href="#b7"/></svg></button>
<span class="sep"></span>
<button class="on" aria-label="Selección a tabla"><svg><use href="#b8"/></svg></button>
<button class="on" aria-label="Tabla a selección"><svg><use href="#b9"/></svg></button>
<button aria-label="Actualizar"><svg><use href="#b10"/></svg></button>
<span class="sep"></span>
<button aria-label="Insertar bloque"><svg><use href="#b11"/></svg></button>
<button aria-label="Multiplicar"><svg><use href="#b12"/></svg></button>
<button aria-label="Dividir"><svg><use href="#b13"/></svg></button>
<span class="sep"></span>
<button aria-label="Vaciar bloque"><svg><use href="#b14"/></svg></button>
<span class="sep"></span>
<button aria-label="Eliminar fila"><svg><use href="#b15"/></svg></button>
<button aria-label="Insertar fila"><svg><use href="#b16"/></svg></button>
<button aria-label="Quitar fila"><svg><use href="#b17"/></svg></button>
<span class="sep"></span>
<button aria-label="Filas marcadas"><svg><use href="#b18"/></svg></button>
<button aria-label="Filas coloreadas"><svg><use href="#b19"/></svg></button>
<span class="sep"></span>
<button aria-label="Filtrar"><svg><use href="#b20"/></svg></button>
<span class="sep"></span>
<button aria-label="Configuración"><svg><use href="#b21"/></svg></button>
<button aria-label="Buscar"><svg><use href="#glas"/></svg></button>
<button aria-label="Excel"><svg><use href="#b22"/></svg></button>
<button aria-label="Calculadora"><svg><use href="#b23"/></svg></button>
<span class="sep"></span>
<button aria-label="Parámetros"><svg viewBox="0 0 16 16"><use href="#b24"/><text class="ab" x="0" y="15">ab=</text></svg></button>
<button aria-label="Fórmula"><svg viewBox="0 0 16 16"><text class="fx" x="2" y="13">fx</text></svg></button>
<button aria-label="Borrar fórmula"><svg viewBox="0 0 16 16"><use href="#b26"/><text class="fx small" x="5" y="14">fx</text></svg></button>
<span class="sep"></span>
<button aria-label="Bloquear"><svg><use href="#b27"/></svg></button>
</div>
</div>
</section>
</main>
</body>
</html>
```
FILE: styles.css
```css
* { box-sizing: border-box; }
body {
  margin: 0;
  height: 100vh;
  display: flex;
  flex-direction: column;
  overflow: hidden;
  background: #d0d3de;
  font-family: "Noto Sans", "Open Sans", sans-serif;
  font-size: 11px;
  color: #3f4a5a;
}
ul { list-style: none; margin: 0; padding: 0; }
h1, h2 { margin: 0; font-size: 11px; font-weight: normal; }
button { border: 0; padding: 0; background: none; font: inherit; color: inherit; flex: none; }
svg { display: block; flex: none; overflow: visible; }
.sprite { position: absolute; width: 0; height: 0; overflow: hidden; }
.sprite path:not([fill]) { fill: none; }
.ic { width: 16px; height: 16px; }

/* lettering inside icons */
.five { font: bold 11px "Liberation Sans", sans-serif; fill: #f0c020; stroke: #6a5200; stroke-width: .4px; }
.val { font: 8px "Liberation Serif", serif; fill: #666; }
.val.dark { fill: #111; }
.ax { font: 11px "Liberation Serif", serif; fill: #111; }
.tag { font: 7px "Liberation Sans", sans-serif; fill: #000; }
.ab { font: italic bold 10px "Liberation Serif", serif; fill: #111; }
.fx { font: italic 16px "Liberation Serif", serif; fill: #444; }
.fx.small { font-size: 13px; fill: #666; }
.axis { font: 10px "Liberation Sans", sans-serif; text-anchor: middle; }

.titlebar {
  flex: none;
  height: 23px;
  display: flex;
  align-items: center;
  gap: 5px;
  padding-left: 2px;
  background: #fff;
  color: #000;
}
.titlebar h1 { font-family: Roboto, "Open Sans", sans-serif; font-size: 12px; }

.menubar {
  flex: none;
  height: 24px;
  display: flex;
  align-items: center;
  gap: 15px;
  padding-bottom: 1px;
  background: #d0d3de;
}
.menubar a { color: inherit; text-decoration: none; white-space: nowrap; }
.menubar .grip { margin-right: -15px; }
.bridge { width: 17px; height: 14px; margin-right: -6px; }

.toolbar {
  flex: none;
  height: 26px;
  display: flex;
  align-items: center;
  background: linear-gradient(#eaeff8, #e2e7f1 50%, #cdd2dd);
  border-bottom: 1px solid #a9afba;
}
.toolbar.second { height: 27px; border-bottom: 2px solid #7c828c; }
.toolbar > button, .split > button {
  width: 22px;
  height: 22px;
  display: flex;
  align-items: center;
  justify-content: center;
}
.toolbar > button > svg, .split > button > svg { width: 16px; height: 16px; }
.toolbar > .dim { opacity: .45; }
.toolbar > .on {
  border: 1px solid #b0883c;
  background: linear-gradient(#fbc98a, #fdb34e 50%, #ffe39a);
}
.toolbar > .car, .split > .car { width: 13px; }
.car::before {
  content: "";
  border: 3px solid transparent;
  border-top: 3px solid #6c7480;
  border-bottom: 0;
}
.sep { flex: none; width: 8px; height: 14px; display: flex; justify-content: center; }
.sep::before { content: ""; width: 1px; background: #a3a9b4; }
.grip {
  flex: none;
  width: 10px;
  height: 14px;
  background: repeating-linear-gradient(#a0a6b2 0 2px, transparent 2px 4px) 5px 0 / 2px 14px no-repeat;
}
.grip.wide, .second .grip:not(:first-child) { width: 12px; }
.combo {
  flex: none;
  width: 217px;
  height: 19px;
  margin: 0 2px;
  border: 1px solid #9aa0aa;
  appearance: none;
  background:
    linear-gradient(to bottom right, #5c6470 50%, transparent 51%) 208px 7px / 3px 3px no-repeat,
    linear-gradient(to bottom left, #5c6470 50%, transparent 51%) 205px 7px / 3px 3px no-repeat,
    #efefef;
}

.split {
  position: relative;
  flex: none;
  display: flex;
  height: 24px;
  align-items: center;
  align-self: flex-end;
  background: linear-gradient(#fdf0c8, #ffd773 50%, #ffe9a8);
  box-shadow: inset 0 0 0 1px #8f8a80;
}
.menu {
  position: absolute;
  z-index: 2;
  left: 0;
  top: 22px;
  width: 249px;
  padding: 1px 1px 3px;
  border: 1px solid #868b94;
  background: linear-gradient(90deg, #e6ebf5 25px, #b9bec8 25px 26px, #fafafa 26px);
  box-shadow: 3px 2px 0 #4a4a4a;
}
.menu li { position: relative; }
.menu button {
  width: 100%;
  height: 22px;
  display: flex;
  align-items: center;
  gap: 10px;
  padding-left: 4px;
  text-align: left;
  white-space: nowrap;
}
.menu button > svg { width: 16px; height: 16px; }
.menu .rule { height: 8px; padding: 4px 0 3px 30px; }
.menu .rule::before { content: ""; display: block; height: 1px; background: #b4b4b4; }
.menu .hot button {
  border: 1px solid #d8b34c;
  padding-left: 3px;
  background: linear-gradient(#fff8d8, #ffe8a0 48%, #fccc48 50%, #ffe488);
}
.pointer { position: absolute; left: 82px; top: 7px; width: 72px; height: 40px; z-index: 1; }

main {
  flex: 1;
  min-height: 0;
  display: grid;
  grid-template-columns: 286px minmax(0, 1fr);
  column-gap: 4px;
}
aside {
  min-height: 0;
  display: flex;
  flex-direction: column;
  gap: 3px;
  padding: 0 2px 0 1px;
  border-right: 1px solid #a4a9b8;
}
.panelhead {
  flex: none;
  height: 18px;
  display: flex;
  align-items: center;
  gap: 8px;
  padding: 0 4px;
  background: #b8c0cb;
}
.panelhead h2 { flex: 1; }
.panelhead svg { width: 9px; height: 9px; }
.treebox {
  flex: 1;
  min-height: 0;
  display: flex;
  margin: 0 2px;
  border: 1px solid #8c92a0;
  border-bottom: 0;
  background: #fcfbf4;
}
.tree {
  flex: 1;
  min-width: 0;
  overflow: hidden;
  padding-left: 2px;
  font-family: Roboto, "Open Sans", sans-serif;
  font-size: 12px;
  color: #000;
}
.tree ul {
  margin-left: 19px;
  background: repeating-linear-gradient(#777 0 1px, transparent 1px 2px) 9px 0 / 1px 100% no-repeat;
}
.tree ul.end { background-size: 1px calc(100% - 7px); }
.row { height: 18px; display: flex; align-items: center; white-space: nowrap; }
.row .ic { margin: 0 4px 0 1px; }
.row button svg { width: 20px; height: 18px; }
.leaf::before {
  content: "";
  flex: none;
  width: 20px;
  height: 18px;
  background: repeating-linear-gradient(90deg, #777 0 1px, transparent 1px 2px) 9px 10px / 11px 1px no-repeat;
}
.scroll { flex: none; width: 16px; display: flex; flex-direction: column; background: #f0f0f0; }
.scroll button { height: 18px; display: grid; place-items: center; margin-bottom: 23px; }
.scroll svg { width: 10px; height: 6px; }
.thumb { height: 47%; background: #cdcdcd; }

.work { min-width: 0; min-height: 0; display: flex; flex-direction: column; background: #090909; }
.scene { flex: 1; min-height: 0; width: 100%; overflow: hidden; }
.tables { flex: none; border-bottom: 2px solid #6c7078; border-top: 1px solid #fff; background: #d0d3de; padding-top: 5px; }
.tables h2 { height: 19px; padding: 1px 3px; border-top: 1px solid #eef1f6; background: #b8c0cb; }
.toolbar.low { padding-left: 8px; border-bottom: 0; }
```
